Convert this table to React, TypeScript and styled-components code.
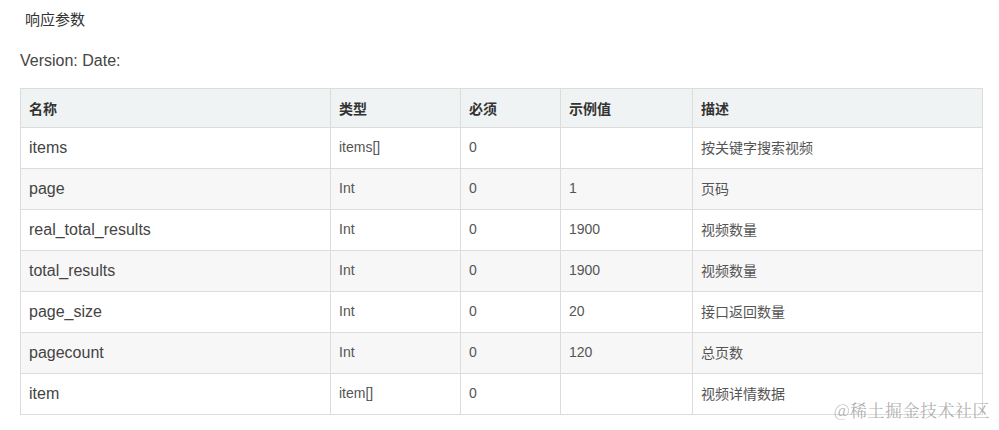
import React from 'react';
import styled, { createGlobalStyle } from 'styled-components';

interface Param {
  name: string;
  type: string;
  required: string;
  example: string;
  desc: string;
}

const params: Param[] = [
  { name: 'items', type: 'items[]', required: '0', example: '', desc: '按关键字搜索视频' },
  { name: 'page', type: 'Int', required: '0', example: '1', desc: '页码' },
  { name: 'real_total_results', type: 'Int', required: '0', example: '1900', desc: '视频数量' },
  { name: 'total_results', type: 'Int', required: '0', example: '1900', desc: '视频数量' },
  { name: 'page_size', type: 'Int', required: '0', example: '20', desc: '接口返回数量' },
  { name: 'pagecount', type: 'Int', required: '0', example: '120', desc: '总页数' },
  { name: 'item', type: 'item[]', required: '0', example: '', desc: '视频详情数据' },
];

const GlobalStyle = createGlobalStyle`
  body {
    margin: 0;
    background: #fff;
    font-family: "Liberation Sans", Arial, "Noto Sans CJK SC", sans-serif;
    color: #333;
  }
`;

const Page = styled.div`
  position: relative;
  width: 999px;
  height: 430px;
  padding: 10px 18px 0 20px;
  box-sizing: border-box;
`;

const Title = styled.h4`
  margin: 0 0 0 5px;
  font-size: 15px;
  font-weight: normal;
  line-height: 20px;
  color: #333;
`;

const Meta = styled.p`
  margin: 21px 0 0;
  font-size: 16px;
  line-height: 20px;
  color: #444;
`;

const Table = styled.table`
  margin-top: 17px;
  width: 962px;
  border-collapse: collapse;
  table-layout: fixed;
`;

const HeadCell = styled.th<{ $w: number }>`
  box-sizing: border-box;
  width: ${p => p.$w}px;
  height: 39px;
  padding: 0 8px;
  background: #f0f3f4;
  border: 1px solid #dcdcdc;
  text-align: left;
  font-size: 14px;
  font-weight: bold;
  color: #333;
`;

const Row = styled.tr<{ $alt: boolean }>`
  background: ${p => (p.$alt ? '#f7f7f7' : '#fff')};
`;

const Cell = styled.td<{ $big?: boolean }>`
  box-sizing: border-box;
  height: 41px;
  padding: ${p => (p.$big ? '0 8px' : '0 8px 2px')};
  border: 1px solid #dcdcdc;
  font-size: ${p => (p.$big ? '16px' : '14px')};
  color: ${p => (p.$big ? '#444' : '#555')};
`;

const Watermark = styled.div`
  position: absolute;
  right: 9px;
  bottom: 8px;
  font-family: "Noto Serif CJK SC", "Noto Sans CJK SC", serif;
  font-size: 17px;
  color: rgba(150, 150, 150, 0.75);
  letter-spacing: 0.5px;
`;

const columns = [
  { label: '名称', w: 310 },
  { label: '类型', w: 130 },
  { label: '必须', w: 100 },
  { label: '示例值', w: 132 },
  { label: '描述', w: 290 },
];

export default function App() {
  return (
    <Page>
      <GlobalStyle />
      <Title>响应参数</Title>
      <Meta>Version: Date:</Meta>
      <Table>
        <thead>
          <tr>
            {columns.map(c => (
              <HeadCell key={c.label} $w={c.w}>{c.label}</HeadCell>
            ))}
          </tr>
        </thead>
        <tbody>
          {params.map((p, i) => (
            <Row key={p.name} $alt={i % 2 === 1}>
              <Cell $big>{p.name}</Cell>
              <Cell>{p.type}</Cell>
              <Cell>{p.required}</Cell>
              <Cell>{p.example}</Cell>
              <Cell>{p.desc}</Cell>
            </Row>
          ))}
        </tbody>
      </Table>
      <Watermark>@稀土掘金技术社区</Watermark>
    </Page>
  );
}
